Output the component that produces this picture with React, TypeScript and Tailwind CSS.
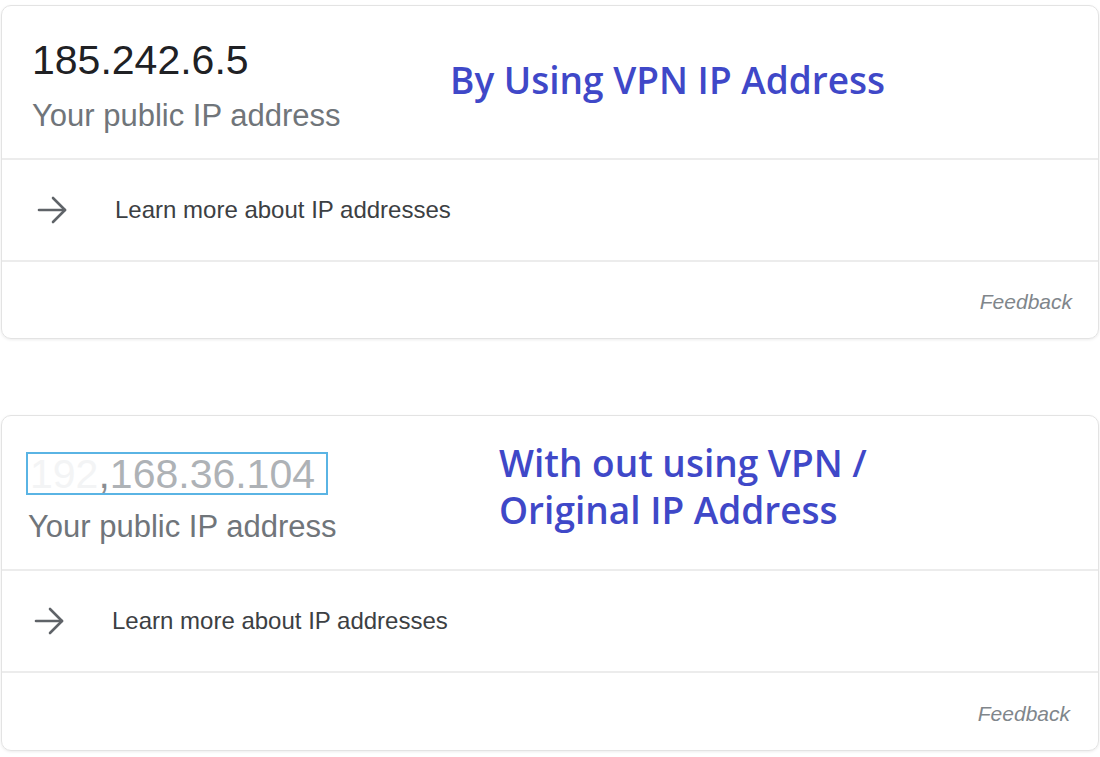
function Arrow() {
  return (
    <svg width="30" height="28" viewBox="0 0 30 28" fill="none" stroke="#5f6368" strokeWidth="2.6" strokeLinecap="round" strokeLinejoin="round">
      <path d="M2 14H28" />
      <path d="M16 2L28 14L16 26" />
    </svg>
  );
}

function LearnRow({ pl, gap }: { pl: string; gap: string }) {
  return (
    <div className={`flex h-[102px] items-center border-b-2 border-[#ececec] ${pl}`}>
      <Arrow />
      <span className={`${gap} text-[24px] text-[#3c4043]`}>Learn more about IP addresses</span>
    </div>
  );
}

function FeedbackRow({ pr }: { pr: string }) {
  return (
    <div className={`flex flex-1 items-center justify-end pt-[4px] ${pr}`}>
      <span className="text-[21px] italic text-[#80868b]">Feedback</span>
    </div>
  );
}

export default function App() {
  return (
    <div className="min-h-[757px] bg-white px-[1px] pt-[5px] font-['Liberation_Sans',Arial,sans-serif]">
      <div className="flex h-[334px] flex-col rounded-[10px] border border-[#e3e3e3] shadow-[0_1px_3px_rgba(0,0,0,0.08)]">
        <div className="flex border-b-2 border-[#ececec] pb-[24px] pl-[30px] pt-[30px]">
          <div className="w-[418px]">
            <div className="text-[41px] leading-[48px] text-[#202124]">185.242.6.5</div>
            <div className="mt-[14px] text-[31px] leading-[36px] text-[#70757a]">Your public IP address</div>
          </div>
          <div className="pt-[20px] font-['Open_Sans',sans-serif] text-[37px] font-semibold leading-[48px] text-[#3f48c8]">
            By Using VPN IP Address
          </div>
        </div>
        <LearnRow pl="pl-[35px]" gap="ml-[48px]" />
        <FeedbackRow pr="pr-[26px]" />
      </div>

      <div className="mt-[76px] flex h-[336px] flex-col rounded-[10px] border border-[#e3e3e3] shadow-[0_1px_3px_rgba(0,0,0,0.08)]">
        <div className="flex border-b-2 border-[#ececec] pb-[24px] pl-[24px] pt-[36px]">
          <div className="w-[473px]">
            <div className="flex h-[43px] w-[302px] items-center border-2 border-[#5ab4e4] pl-[2px] text-[41px] leading-[40px] text-[#aeb2b6]">
              <span className="text-[#f3f4f5]">192</span>
              <span className="text-[#8a8e92]">,</span>168.36.104
            </div>
            <div className="mt-[14px] pl-[2px] text-[31px] leading-[36px] text-[#70757a]">Your public IP address</div>
          </div>
          <div className="-mt-[13px] font-['Open_Sans',sans-serif] text-[37px] font-semibold leading-[47px] text-[#3f48c8]">
            <div>With out using VPN /</div>
            <div>Original IP Address</div>
          </div>
        </div>
        <LearnRow pl="pl-[32px]" gap="ml-[48px]" />
        <FeedbackRow pr="pr-[28px]" />
      </div>
    </div>
  );
}
